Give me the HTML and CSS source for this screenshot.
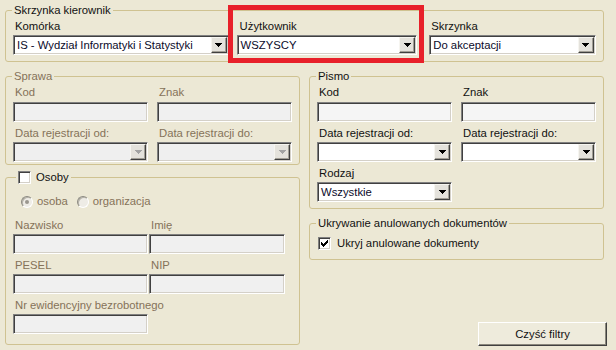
FILE: index.html
```html
<!DOCTYPE html>
<html lang="pl">
<head>
    <meta charset="UTF-8">
    <title>Filtry dokumentów</title>
    <link rel="stylesheet" href="styles.css">
</head>
<body>
    <div class="page">
        <fieldset class="group top">
            <legend>Skrzynka kierownik</legend>
            <div class="top-row">
                <div class="field f-unit">
                    <span class="label">Komórka</span>
                    <div class="select">
                        <span class="value">IS - Wydział Informatyki i Statystyki</span>
                        <span class="drop"><svg width="7" height="4" viewBox="0 0 7 4"><path d="M0 0h7v1h-1v1h-1v1h-1v1h-1v-1h-1v-1h-1v-1h-1z"/></svg></span>
                    </div>
                </div>
                <div class="field f-user highlight">
                    <span class="label">Użytkownik</span>
                    <div class="select">
                        <span class="value">WSZYSCY</span>
                        <span class="drop"><svg width="7" height="4" viewBox="0 0 7 4"><path d="M0 0h7v1h-1v1h-1v1h-1v1h-1v-1h-1v-1h-1v-1h-1z"/></svg></span>
                    </div>
                </div>
                <div class="field f-box">
                    <span class="label">Skrzynka</span>
                    <div class="select">
                        <span class="value">Do akceptacji</span>
                        <span class="drop"><svg width="7" height="4" viewBox="0 0 7 4"><path d="M0 0h7v1h-1v1h-1v1h-1v1h-1v-1h-1v-1h-1v-1h-1z"/></svg></span>
                    </div>
                </div>
            </div>
        </fieldset>

        <div class="columns">
            <div class="col">
                <fieldset class="group sprawa disabled">
                    <legend>Sprawa</legend>
                    <div class="grid2">
                        <div class="field">
                            <span class="label">Kod</span>
                            <input class="text" type="text" disabled>
                        </div>
                        <div class="field">
                            <span class="label">Znak</span>
                            <input class="text" type="text" disabled>
                        </div>
                        <div class="field">
                            <span class="label">Data rejestracji od:</span>
                            <div class="select off">
                                <span class="value"></span>
                                <span class="drop"><svg width="7" height="4" viewBox="0 0 7 4"><path d="M0 0h7v1h-1v1h-1v1h-1v1h-1v-1h-1v-1h-1v-1h-1z"/></svg></span>
                            </div>
                        </div>
                        <div class="field">
                            <span class="label">Data rejestracji do:</span>
                            <div class="select off">
                                <span class="value"></span>
                                <span class="drop"><svg width="7" height="4" viewBox="0 0 7 4"><path d="M0 0h7v1h-1v1h-1v1h-1v1h-1v-1h-1v-1h-1v-1h-1z"/></svg></span>
                            </div>
                        </div>
                    </div>
                </fieldset>

                <fieldset class="group osoby">
                    <legend>
                        <span class="check"></span>
                        <span>Osoby</span>
                    </legend>
                    <div class="radios disabled">
                        <span class="radio on"></span>
                        <span class="radio-text">osoba</span>
                        <span class="radio"></span>
                        <span class="radio-text">organizacja</span>
                    </div>
                    <div class="grid2 tight disabled">
                        <div class="field">
                            <span class="label">Nazwisko</span>
                            <input class="text" type="text" disabled>
                        </div>
                        <div class="field">
                            <span class="label">Imię</span>
                            <input class="text" type="text" disabled>
                        </div>
                        <div class="field">
                            <span class="label">PESEL</span>
                            <input class="text" type="text" disabled>
                        </div>
                        <div class="field">
                            <span class="label">NIP</span>
                            <input class="text" type="text" disabled>
                        </div>
                        <div class="field">
                            <span class="label">Nr ewidencyjny bezrobotnego</span>
                            <input class="text" type="text" disabled>
                        </div>
                    </div>
                </fieldset>
            </div>

            <div class="col">
                <fieldset class="group pismo">
                    <legend>Pismo</legend>
                    <div class="grid2">
                        <div class="field">
                            <span class="label">Kod</span>
                            <input class="text" type="text">
                        </div>
                        <div class="field">
                            <span class="label">Znak</span>
                            <input class="text" type="text">
                        </div>
                        <div class="field">
                            <span class="label">Data rejestracji od:</span>
                            <div class="select">
                                <span class="value"></span>
                                <span class="drop"><svg width="7" height="4" viewBox="0 0 7 4"><path d="M0 0h7v1h-1v1h-1v1h-1v1h-1v-1h-1v-1h-1v-1h-1z"/></svg></span>
                            </div>
                        </div>
                        <div class="field">
                            <span class="label">Data rejestracji do:</span>
                            <div class="select">
                                <span class="value"></span>
                                <span class="drop"><svg width="7" height="4" viewBox="0 0 7 4"><path d="M0 0h7v1h-1v1h-1v1h-1v1h-1v-1h-1v-1h-1v-1h-1z"/></svg></span>
                            </div>
                        </div>
                        <div class="field">
                            <span class="label">Rodzaj</span>
                            <div class="select">
                                <span class="value">Wszystkie</span>
                                <span class="drop"><svg width="7" height="4" viewBox="0 0 7 4"><path d="M0 0h7v1h-1v1h-1v1h-1v1h-1v-1h-1v-1h-1v-1h-1z"/></svg></span>
                            </div>
                        </div>
                    </div>
                </fieldset>

                <fieldset class="group ukryj">
                    <legend>Ukrywanie anulowanych dokumentów</legend>
                    <div class="check-row">
                        <span class="check">
                            <svg width="7" height="7" viewBox="0 0 7 7"><path d="M0 2h1v1h1v1h1v-1h1v-1h1v-1h1v-1h1v3h-1v1h-1v1h-1v1h-1v1h-1v-1h-1v-1h-1v-1h-1z"/></svg>
                        </span>
                        <span>Ukryj anulowane dokumenty</span>
                    </div>
                </fieldset>

                <div class="actions">
                    <button class="btn" type="button">Czyść filtry</button>
                </div>
            </div>
        </div>
    </div>
</body>
</html>
```

FILE: styles.css
```css
* {
    box-sizing: border-box;
}
body {
    margin: 0;
    background-color: #ece8d5;
    font-family: "Liberation Sans", Arial, sans-serif;
    font-size: 11.3px;
    color: #111;
}
.page {
    width: 616px;
    height: 350px;
    padding: 4px 12px 0 5px;
    overflow: hidden;
}

/* group boxes */
.group {
    margin: 0;
    min-width: 0;
    border: 1px solid #cfc291;
    border-radius: 3px;
    padding: 3px 7px 6px;
}
.group legend {
    padding: 0 2px;
    margin-left: -1px;
    line-height: 13px;
}
.label {
    display: block;
    line-height: 13px;
    padding-left: 2px;
    white-space: nowrap;
}
.disabled,
.disabled legend {
    color: #857259;
}

/* top box */
.top-row {
    display: flex;
}
.f-unit {
    width: 216px;
}
.f-user {
    width: 181px;
    margin-left: 8px;
}
.f-user .label {
    padding-left: 3px;
}
.f-box {
    width: 167px;
    margin-left: 12px;
}
.highlight {
    position: relative;
}
.highlight::after {
    content: "";
    position: absolute;
    left: -9px;
    right: -7px;
    top: -15px;
    bottom: -8px;
    border: 5px solid #e8202a;
}

/* two columns below */
.columns {
    display: flex;
    gap: 9px;
    margin-top: 8px;
}
.col {
    width: 295px;
    flex: none;
    display: flex;
    flex-direction: column;
}

/* controls */
.select {
    display: flex;
    align-items: center;
    height: 20px;
    margin-top: 2px;
    padding: 1px;
    background: #fff;
    border: 1px solid;
    border-color: #808080 #fff #fff #808080;
    box-shadow: inset 1px 1px #404040, inset -1px -1px #d4d0c8;
}
.select .value {
    flex: 1;
    padding-left: 2px;
    line-height: 16px;
    white-space: nowrap;
    overflow: hidden;
    color: #0a0a2a;
}
.drop {
    display: flex;
    align-items: center;
    justify-content: center;
    width: 16px;
    height: 16px;
    background: #e4e2dc;
    border: 1px solid;
    border-color: #f6f5f0 #404040 #404040 #f6f5f0;
    box-shadow: inset -1px -1px #a19e95;
}
.drop svg {
    fill: #000;
}
.select.off {
    background: #efefef;
}
.select.off .drop svg {
    fill: #a3a3a3;
}
.text {
    display: block;
    width: 100%;
    height: 20px;
    margin: 3px 0 0;
    padding: 0 2px;
    font: inherit;
    background: #f0f0f0;
    border: 1px solid;
    border-color: #808080 #fff #fff #808080;
    box-shadow: inset 1px 1px #404040, inset -1px -1px #d4d0c8;
    outline: none;
}
.pismo .text {
    background: #f5f5f5;
}

/* sprawa / pismo */
.grid2 {
    display: grid;
    grid-template-columns: 135px 135px;
    column-gap: 9px;
    row-gap: 5px;
}
.sprawa {
    padding-bottom: 2px;
}
.pismo {
    padding-bottom: 6px;
}

/* osoby */
.osoby {
    margin-top: 6px;
    padding-top: 11px;
    padding-bottom: 10px;
}
.osoby legend {
    display: flex;
    align-items: center;
    gap: 5px;
    margin-left: 3px;
    color: #111;
}
.radios {
    display: flex;
    align-items: center;
    line-height: 13px;
    padding-left: 8px;
}
.radio {
    display: flex;
    align-items: center;
    justify-content: center;
    width: 12px;
    height: 12px;
    border-radius: 50%;
    border: 1px solid;
    border-color: #8c8a82 #fff #fff #8c8a82;
    background: #eeece6;
    box-shadow: inset 1px 1px #b5b2a8;
}
.radio.on::after {
    content: "";
    width: 4px;
    height: 4px;
    border-radius: 50%;
    background: #9a978f;
}
.radio-text {
    margin: 0 9px 0 4px;
}
.grid2.tight {
    grid-template-columns: 135px 136px;
    column-gap: 1px;
    margin-top: 11px;
}
.tight .text {
    margin-top: 2px;
}

/* checkboxes */
.check {
    display: flex;
    align-items: center;
    justify-content: center;
    width: 13px;
    height: 13px;
    background: #fff;
    border: 1px solid;
    border-color: #808080 #fff #fff #808080;
    box-shadow: inset 1px 1px #404040, inset -1px -1px #d4d0c8;
}
.ukryj {
    margin-top: 8px;
    padding-top: 7px;
    padding-bottom: 9px;
}
.check-row {
    display: flex;
    align-items: center;
    gap: 6px;
    line-height: 13px;
    padding-left: 1px;
}

/* button */
.actions {
    display: flex;
    justify-content: flex-end;
    margin-top: 62px;
    margin-right: -3px;
}
.btn {
    width: 129px;
    height: 24px;
    font: inherit;
    color: #111;
    background: #eeebdc;
    border: 1px solid;
    border-color: #fff #404040 #404040 #fff;
    box-shadow: inset -1px -1px #8a877c;
    padding: 0;
}
```
